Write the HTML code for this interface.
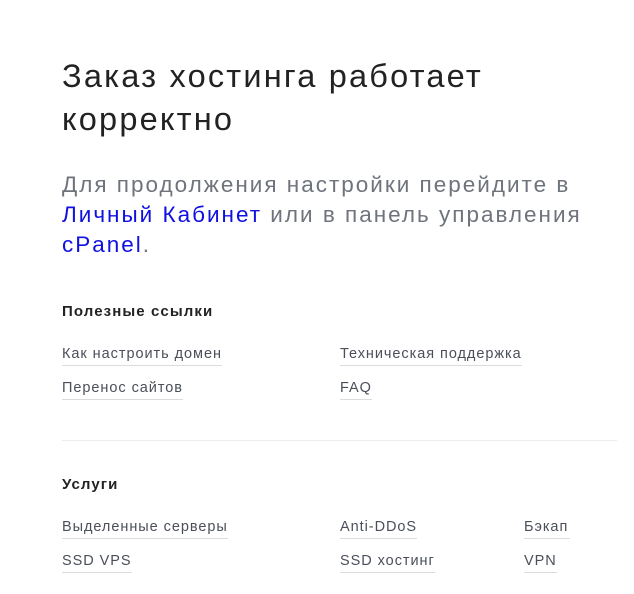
<!DOCTYPE html>
<html><head><meta charset="utf-8"><style>
html,body{margin:0;padding:0;background:#fff;width:634px;height:594px;overflow:hidden;font-family:"Liberation Sans","DejaVu Sans",sans-serif;}
.a{position:absolute;white-space:nowrap;}
h1{position:absolute;left:62px;top:55px;margin:0;font-weight:normal;font-size:32.5px;line-height:43px;color:#222;letter-spacing:2.2px;}
p{position:absolute;left:62px;top:170px;margin:0;font-size:22.5px;line-height:30px;color:#6e737c;width:600px;letter-spacing:2px;white-space:nowrap;}
p span{color:#1010e0;}
.h{font-size:15px;font-weight:bold;color:#222;letter-spacing:1.1px;}
.l{font-size:14.5px;color:#4a4f59;padding-bottom:3px;border-bottom:1px solid #dcdcdc;letter-spacing:0.95px;}
.hr{position:absolute;left:62px;top:440px;width:555px;height:1px;background:#ececec;}
</style></head><body>
<h1>Заказ хостинга работает<br>корректно</h1>
<p>Для продолжения настройки перейдите в<br><span>Личный Кабинет</span> или в панель управления<br><span>cPanel</span>.</p>
<div class="a h" style="left:62px;top:303px">Полезные ссылки</div>
<div class="a l" style="left:62px;top:346px">Как настроить домен</div>
<div class="a l" style="left:340px;top:346px">Техническая поддержка</div>
<div class="a l" style="left:62px;top:380px">Перенос сайтов</div>
<div class="a l" style="left:340px;top:380px">FAQ</div>
<div class="hr"></div>
<div class="a h" style="left:62px;top:476px">Услуги</div>
<div class="a l" style="left:62px;top:519px">Выделенные серверы</div>
<div class="a l" style="left:340px;top:519px">Anti-DDoS</div>
<div class="a l" style="left:524px;top:519px;padding-right:2px">Бэкап</div>
<div class="a l" style="left:62px;top:553px">SSD VPS</div>
<div class="a l" style="left:340px;top:553px">SSD хостинг</div>
<div class="a l" style="left:524px;top:553px">VPN</div>
</body></html>
